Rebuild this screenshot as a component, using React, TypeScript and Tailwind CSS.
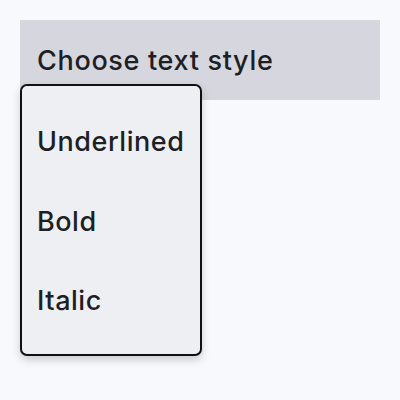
export default function App() {
  return (
    <div className="w-[400px] h-[400px] bg-[#f8f9fc] p-5 relative" style={{ fontFamily: "Inter, 'Noto Sans', sans-serif" }}>
      <button className="w-[360px] h-20 bg-[#d6d7de] text-left px-[17px] pt-[2px] text-[27px] font-medium text-[#1d1f24] tracking-[0.025em]">
        Choose text style
      </button>
      <div className="absolute left-5 top-[84px] w-[182px] h-[272px] bg-[#eeeff3] border-2 border-[#0f1012] rounded-[7px] shadow-[0_4px_8px_rgba(0,0,0,0.18)] pt-[17px] pb-[13px] flex flex-col">
        {["Underlined", "Bold", "Italic"].map((t) => (
          <div key={t} className="h-20 flex items-center px-[15px] text-[27px] font-medium text-[#1d1f24] tracking-[0.02em]">
            {t}
          </div>
        ))}
      </div>
    </div>
  );
}
